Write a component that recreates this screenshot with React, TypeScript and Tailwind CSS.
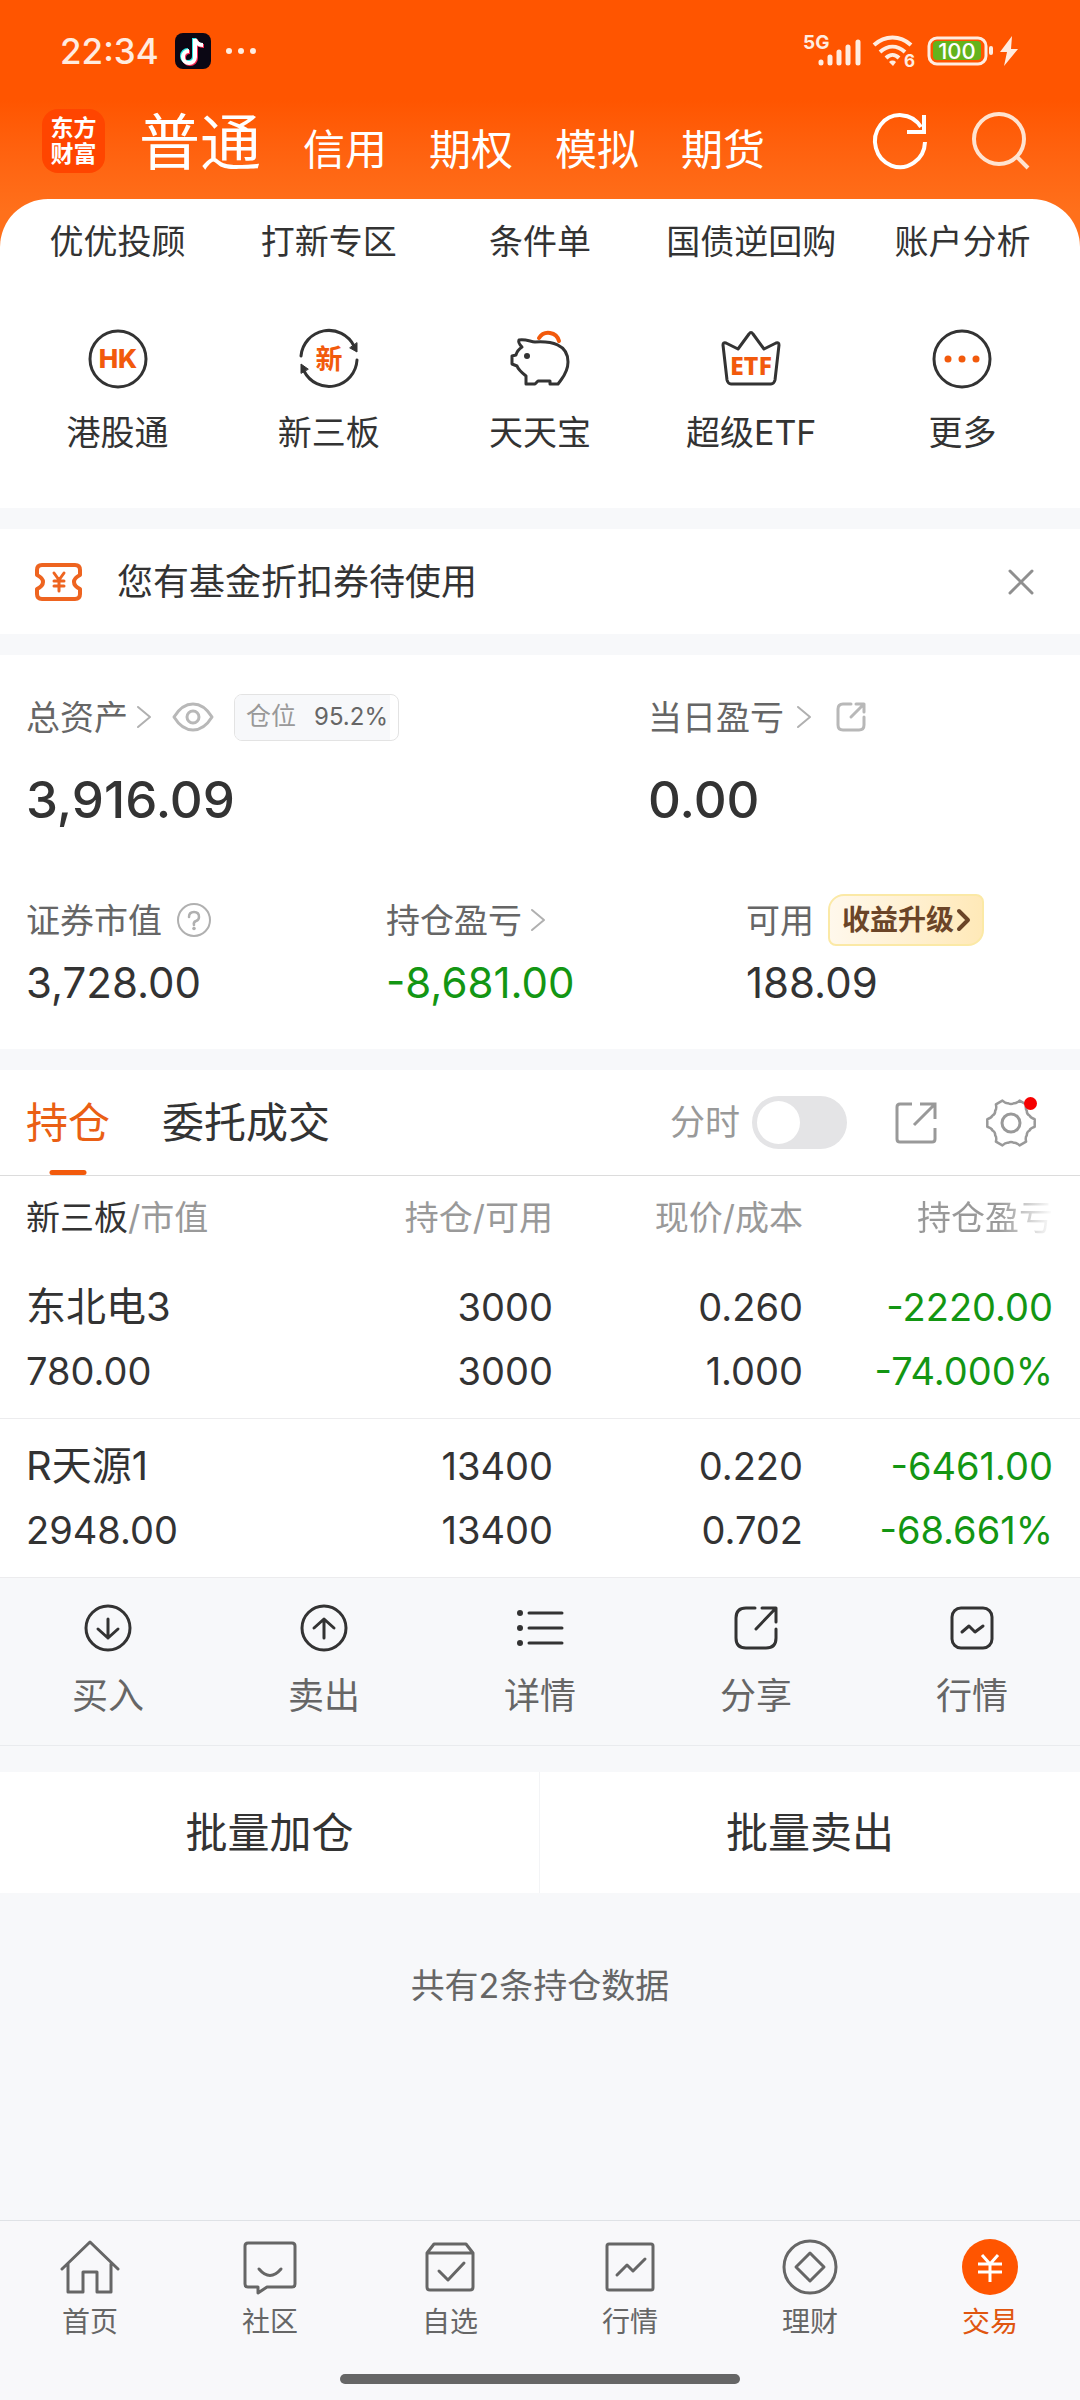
import { useState } from 'react';
import type { ReactNode } from 'react';
import clsx from 'clsx';

interface Holding {
  name:   string;
  value:  string;
  volume: string;
  usable: string;
  price:  string;
  cost:   string;
  profit: string;
  rate:   string;
}

const ACCOUNTS = ['信用', '期权', '模拟', '期货'];

const SHORTCUTS = ['优优投顾', '打新专区', '条件单', '国债逆回购', '账户分析'];

const HOLDINGS: Holding[] = [
  { name: '东北电3', value: '780.00',  volume: '3000',  usable: '3000',  price: '0.260', cost: '1.000', profit: '-2220.00', rate: '-74.000%' },
  { name: 'R天源1',  value: '2948.00', volume: '13400', usable: '13400', price: '0.220', cost: '0.702', profit: '-6461.00', rate: '-68.661%' },
];

/* Six-tooth gear outline around (26, 26) */
function gearPath() {
  const pt = (r: number, deg: number) => {
    const a = (deg * Math.PI) / 180;
    return `${(26 + r * Math.cos(a)).toFixed(1)} ${(26 + r * Math.sin(a)).toFixed(1)}`;
  };
  let d = `M${pt(24, -9)}`;
  for (let i = 0; i < 6; i++) {
    const a = i * 60;
    d += `L${pt(24, a + 9)}Q${pt(20, a + 15)} ${pt(20, a + 22)}Q${pt(18, a + 30)} ${pt(20, a + 38)}Q${pt(20, a + 45)} ${pt(24, a + 51)}`;
  }
  return d + 'Z';
}

function Icon({ w, h, sw = 3, className, children }: { w: number; h: number; sw?: number; className?: string; children: ReactNode }) {
  return (
    <svg
      width={w} height={h} viewBox={`0 0 ${w} ${h}`} fill="none" stroke="currentColor" strokeWidth={sw}
      strokeLinecap="round" strokeLinejoin="round" aria-hidden="true" className={clsx('shrink-0 overflow-visible', className)}
    >
      {children}
    </svg>
  );
}

function Chevron({ className }: { className?: string }) {
  return <Icon w={16} h={26} sw={2} className={clsx('text-[#b0b0b0]', className)}><path d="M2 3l12 10L2 23" /></Icon>;
}

function StatusBar() {
  return (
    <div className="flex h-[102px] items-center pl-[60px] pr-[61px] text-[#ffece0]">
      <span className="text-[35px] font-medium leading-none">22:34</span>
      <Icon w={36} h={36} className="ml-4" sw={4}>
        <rect width="36" height="36" rx="8" fill="#0b0714" stroke="none" />
        <g strokeLinecap="butt">
          <path d="M19 5v18a6 6 0 1 1-6-6M19 6c1 4 4 6 8 6" stroke="#2fe9e4" />
          <path d="M21 7v18a6 6 0 1 1-6-6M21 7c1 4 4 6 8 6" stroke="#fb2b55" />
          <path d="M20 6v18a6 6 0 1 1-6-6M20 6c1 4 4 6 8 6" stroke="#fff" />
        </g>
      </Icon>
      <Icon w={36} h={12} className="ml-[14px]"><g fill="currentColor" stroke="none"><circle cx="4" cy="6" r="3" /><circle cx="16" cy="6" r="3" /><circle cx="28" cy="6" r="3" /></g></Icon>
      <div className="ml-auto flex items-center">
        <Icon w={60} h={44}>
          <text x="0" y="20" fontSize="19" fontWeight="700" fill="currentColor" stroke="none">5G</text>
          <path d="M18 34v-1M27 34v-6M36 34V23M45 34V18M55 34V13" strokeWidth="5" />
        </Icon>
        <Icon w={46} h={44} sw={4} className="ml-2">
          <path d="M3 16c11-10 26-10 37 0M9 23c8-7 17-7 25 0M15 29c4-4 9-4 13 0" strokeLinecap="butt" />
          <path d="M18 33a5 5 0 0 1 7 0l-3 4z" fill="currentColor" stroke="none" />
          <text x="33" y="38" fontSize="17" fontWeight="700" fill="currentColor" stroke="none">6</text>
        </Icon>
        <Icon w={68} h={30} className="ml-[10px]">
          <rect x="2" y="2" width="57" height="26" rx="8" />
          <rect x="6" y="5" width="48" height="19" rx="4" fill="#64b31c" stroke="none" />
          <path d="M64 12v5" strokeWidth="4" />
          <text x="30" y="23" fontSize="22" fontWeight="500" textAnchor="middle" fill="#fff" stroke="none">100</text>
        </Icon>
        <Icon w={20} h={30} className="ml-1"><path d="M13 0L1 16h7L5 30 19 13h-7z" fill="currentColor" stroke="none" /></Icon>
      </div>
    </div>
  );
}

function Header() {
  return (
    <header className="bg-linear-to-b from-[#ff5500] from-40% to-[#ff701b] to-85% pb-[51px]">
      <StatusBar />
      <div className="flex h-[97px] items-center pl-[42px] pr-[49px] text-white">
        <div className="mb-5 flex h-[64px] w-[63px] flex-col items-center justify-center rounded-2xl bg-[#ff4500] text-[23px] font-bold leading-[26px]">
          <span>东方</span>
          <span>财富</span>
        </div>
        <nav className="mb-4 ml-[34px] flex items-baseline gap-[42px]" aria-label="账户类型">
          <a href="#normal" className="text-[61px] leading-[76px]" aria-current="page">普通</a>
          {ACCOUNTS.map((a) => <a key={a} href="#account" className="text-[42px] leading-[60px]">{a}</a>)}
        </nav>
        <button type="button" aria-label="刷新" className="mb-5 ml-auto">
          <Icon w={58} h={58} sw={4}>
            <path d="M54 30A25 26 0 1 1 50 15" strokeLinecap="butt" />
            <path d="M53 3v17H36" strokeLinecap="butt" strokeLinejoin="miter" />
          </Icon>
        </button>
        <button type="button" aria-label="搜索" className="mb-5 ml-[42px]">
          <Icon w={60} h={60} sw={4} className="text-[#ffe3d0]">
            <circle cx="28" cy="28" r="25" />
            <path d="M45 45l12 12" strokeLinecap="butt" />
          </Icon>
        </button>
      </div>
    </header>
  );
}

const MENU = [
  {
    label: '港股通',
    icon: (
      <>
        <circle cx="30" cy="30" r="28" />
        <text x="30" y="39" fontSize="26" fontWeight="800" textAnchor="middle" fill="#f25a0c" stroke="none">HK</text>
      </>
    ),
  },
  {
    label: '新三板',
    icon: (
      <>
        <path d="M2 27A28 28 0 0 1 55 17M58 31A28 28 0 0 1 5 42" />
        <path d="M58 14v9l-7-4zM2 44v-9l7 5z" fill="currentColor" strokeWidth="1" />
        <text x="30" y="40" fontSize="27" fontWeight="700" textAnchor="middle" fill="#f25a0c" stroke="none">新</text>
      </>
    ),
  },
  {
    label: '天天宝',
    icon: (
      <>
        <path d="M29 9a11 11 0 0 1 20 3" stroke="#f25a0c" strokeWidth="4" />
        <path d="M12 18c-3-3-4-5-3-7 6-1 10 1 16 2 16-1 33 2 33 20 0 8-4 14-7 18l-3 4h-8v-3H28l-3 3h-9v-8C11 43 8 40 7 37l-5-2v-8l4-1c1-4 3-6 6-8z" />
        <circle cx="17" cy="27" r="3" fill="currentColor" stroke="none" />
      </>
    ),
  },
  {
    label: '超级ETF',
    icon: (
      <>
        <path d="M2 16q0-3 3-2l12 6L28 5q2-3 4 0l11 15 12-6q3-1 3 2l-4 35q-1 4-4 4H10q-3 0-4-4z" />
        <text x="30" y="46" fontSize="25" fontWeight="800" textAnchor="middle" fill="#f25a0c" stroke="none" fontFamily="'Noto Sans', sans-serif">ETF</text>
      </>
    ),
  },
  {
    label: '更多',
    icon: (
      <>
        <circle cx="30" cy="30" r="28" />
        <g fill="#f25a0c" stroke="none"><circle cx="16" cy="30" r="3.5" /><circle cx="30" cy="30" r="3.5" /><circle cx="44" cy="30" r="3.5" /></g>
      </>
    ),
  },
];

function QuickMenu() {
  return (
    <section className="-mt-[51px] rounded-t-[48px] bg-white px-3 pb-[50px] pt-[18px]">
      <div className="grid grid-cols-5 text-center text-[34px] leading-[50px]">
        {SHORTCUTS.map((s) => <a key={s} href="#shortcut" className="whitespace-nowrap">{s}</a>)}
      </div>
      <div className="mt-[62px] grid grid-cols-5 text-[34px] leading-[50px]">
        {MENU.map((m) => (
          <a key={m.label} href="#menu" className="flex flex-col items-center gap-[19px]">
            <Icon w={60} h={60}>{m.icon}</Icon>
            <span className="whitespace-nowrap">{m.label}</span>
          </a>
        ))}
      </div>
    </section>
  );
}

function CouponNotice() {
  return (
    <section className="mt-[21px] flex h-[105px] items-center bg-white pl-[34px] pr-[45px]">
      <Icon w={50} h={40} sw={4} className="text-[#ee6420]">
        <path d="M8 3h33q5 0 5 5v5q-6 3-6 7t6 7v5q0 5-5 5H8q-5 0-5-5v-5q6-3 6-7t-6-7V8q0-5 5-5z" />
        <path d="M20 11l5 7 5-7M25 18v11M20 19h10M20 24h10" strokeWidth="3" />
      </Icon>
      <p className="ml-[33px] text-[36px] leading-[52px]">您有基金折扣券待使用</p>
      <button type="button" aria-label="关闭" className="ml-auto">
        <Icon w={28} h={28} className="text-[#8f8f8f]"><path d="M3 3l22 22M25 3L3 25" /></Icon>
      </button>
    </section>
  );
}

function Assets() {
  return (
    <section className="mt-[21px] bg-white pb-[38px] pt-[37px]">
      <div className="flex">
        <div className="w-[622px] shrink-0 pl-[26px]">
          <div className="flex h-[50px] items-center text-[34px] text-[#666]">
            总资产
            <Chevron className="ml-2" />
            <button type="button" aria-label="隐藏金额" className="ml-5">
              <Icon w={42} h={30} className="text-[#b8b8b8]">
                <path d="M2 15Q10 2 21 2t19 13Q32 28 21 28T2 15z" />
                <circle cx="21" cy="15" r="6" />
              </Icon>
            </button>
            <span className="ml-5 flex h-[47px] items-center overflow-hidden rounded-lg border border-[#e3e3e3] pr-2 text-[25px]">
              <span className="flex h-full items-center gap-[18px] bg-[#f7f8fa] pl-[11px] pr-0.5">
                <span className="text-[#999]">仓位</span>
                <span className="text-[24px]">95.2%</span>
              </span>
            </span>
          </div>
          <p className="mt-[23px] text-[51px] font-medium leading-[70px]">3,916.09</p>
        </div>
        <div className="flex-1 pl-[26px]">
          <div className="flex h-[50px] items-center text-[34px] text-[#666]">
            当日盈亏
            <Chevron className="ml-3" />
            <button type="button" aria-label="分享当日盈亏" className="ml-6">
              <Icon w={30} h={30} className="text-[#b8b8b8]">
                <path d="M15 2H7Q2 2 2 7v16q0 5 5 5h16q5 0 5-5v-8M15 15L28 2M20 2h8v8" />
              </Icon>
            </button>
          </div>
          <p className="mt-[23px] text-[51px] font-medium leading-[70px]">0.00</p>
        </div>
      </div>
      <div className="mt-[58px] grid grid-cols-3">
        <div className="pl-[26px]">
          <div className="flex h-[54px] items-center text-[34px] text-[#666]">
            证券市值
            <Icon w={36} h={36} sw={2} className="ml-[14px] text-[#b0b0b0]">
              <circle cx="18" cy="18" r="16" />
              <path d="M13 15q0-5 5-5t5 5q0 3-3 4t-2 4" strokeWidth="2.5" />
              <circle cx="18" cy="26.5" r="1.8" fill="currentColor" stroke="none" />
            </Icon>
          </div>
          <p className="mt-2 text-[42px] leading-[56px]">3,728.00</p>
        </div>
        <div className="pl-[26px]">
          <div className="flex h-[54px] items-center text-[34px] text-[#666]">
            持仓盈亏
            <Chevron className="ml-2" />
          </div>
          <p className="mt-2 text-[42px] leading-[56px] text-[#139613]">-8,681.00</p>
        </div>
        <div className="pl-[26px]">
          <div className="flex h-[54px] items-center text-[34px] text-[#666]">
            可用
            <button type="button" className="ml-[14px] flex h-[52px] items-center rounded-bl-lg rounded-br-2xl rounded-tl-2xl rounded-tr-lg border-2 border-[#fbe9a6] bg-linear-to-r from-[#fff8ec] to-[#ffe9b8] px-3 text-[28px] font-bold text-[#6b4528]">
              收益升级
              <Icon w={14} h={24} sw={4} className="ml-0.5"><path d="M3 3l9 9-9 9" /></Icon>
            </button>
          </div>
          <p className="mt-2 text-[42px] leading-[56px]">188.09</p>
        </div>
      </div>
    </section>
  );
}

function HoldingsTabs() {
  const [tab, setTab] = useState('持仓');
  const [intraday, setIntraday] = useState(false);

  return (
    <div className="flex h-[106px] items-center border-b border-[#dcdcdc] pl-[26px] pr-[43px]">
      <div role="tablist" className="flex h-full gap-[52px] text-[42px]">
        {['持仓', '委托成交'].map((t) => (
          <button
            key={t} type="button" role="tab" aria-selected={tab === t} onClick={() => setTab(t)}
            className={clsx('relative', tab === t && 'text-[#ea5f14]')}
          >
            {t}
            {tab === t && <span className="absolute bottom-0 left-1/2 h-[5px] w-[37px] -translate-x-1/2 rounded-full bg-[#f25a0c]" />}
          </button>
        ))}
      </div>
      <label className="ml-auto flex items-center gap-3 text-[35px] text-[#999]">
        分时
        <input
          type="checkbox" role="switch" checked={intraday} onChange={(e) => setIntraday(e.target.checked)}
          className="h-[53px] w-[95px] appearance-none rounded-full bg-[#e4e4e6] p-[5px] before:block before:size-[43px] before:rounded-full before:bg-white checked:bg-[#f25a0c] checked:before:ml-[42px]"
        />
      </label>
      <button type="button" aria-label="分享持仓" className="ml-[48px]">
        <Icon w={42} h={42} className="text-[#999]">
          <path d="M17 2H5Q2 2 2 5v32q0 3 3 3h32q3 0 3-3V26M19 23L40 2M25 2h15v15" strokeLinecap="butt" strokeLinejoin="miter" />
        </Icon>
      </button>
      <button type="button" aria-label="设置" className="relative ml-[48px]">
        <Icon w={52} h={52} className="text-[#999]">
          <path d={gearPath()} strokeWidth="2.5" />
          <circle cx="26" cy="26" r="9" />
        </Icon>
        <span className="absolute right-0 top-0 size-[13px] rounded-full bg-[#f60000]" />
      </button>
    </div>
  );
}

function HoldingsTable() {
  return (
    <table className="w-full table-fixed text-right text-[38px] leading-[64px]">
      <thead>
        <tr className="h-[84px] whitespace-nowrap text-[34px] text-[#999]">
          <th scope="col" className="pl-[26px] text-left font-normal"><span className="text-[#333]">新三板</span>/市值</th>
          <th scope="col" className="w-[250px] font-normal">持仓/可用</th>
          <th scope="col" className="w-[250px] font-normal">现价/成本</th>
          <th scope="col" className="w-[277px] pr-[27px] font-normal">
            <span className="bg-linear-to-r from-[#999] from-60% to-[#fff] bg-clip-text text-transparent">持仓盈亏</span>
          </th>
        </tr>
      </thead>
      <tbody>
        {HOLDINGS.map((h) => (
          <tr key={h.name} className="border-b border-[#ececee]">
            <td className="py-[15px] pl-[26px] text-left"><div className="text-[40px]">{h.name}</div><div>{h.value}</div></td>
            <td><div>{h.volume}</div><div>{h.usable}</div></td>
            <td><div>{h.price}</div><div>{h.cost}</div></td>
            <td className="pr-[27px] text-[#139613]"><div>{h.profit}</div><div>{h.rate}</div></td>
          </tr>
        ))}
      </tbody>
    </table>
  );
}

const ACTIONS = [
  { label: '买入', icon: <><circle cx="24" cy="24" r="22" /><path d="M24 15v19M14 25l10 9 10-9" /></> },
  { label: '卖出', icon: <><circle cx="24" cy="24" r="22" /><path d="M24 34V15M14 24l10-9 10 9" /></> },
  { label: '详情', icon: <><path d="M13 9h33M13 24h33M13 39h33" /><g fill="currentColor" stroke="none"><circle cx="4" cy="9" r="3" /><circle cx="4" cy="24" r="3" /><circle cx="4" cy="39" r="3" /></g></> },
  { label: '分享', icon: <path d="M23 4h-9Q4 4 4 14v20q0 10 10 10h20q10 0 10-10v-9M24 25L43 5M30 4h14v14" /> },
  { label: '行情', icon: <><rect x="4" y="4" width="40" height="40" rx="9" /><path d="M14 28l7-6 6 6 8-6" /></> },
];

const TABS = [
  { label: '首页', icon: <path d="M2 30L30 3l28 27M8 25v28h15V33h14v20h14V25" /> },
  { label: '社区', icon: <><path d="M8 4h44q3 0 3 3v38q0 3-3 3H27l-9 6v-6H8q-3 0-3-3V7q0-3 3-3z" /><path d="M19 30q11 13 22 0" /></> },
  { label: '自选', icon: <><path d="M7 14l7-9h32l7 9v34q0 3-3 3H10q-3 0-3-3zM7 14h46" /><path d="M19 32l9 9 16-17" /></> },
  { label: '行情', icon: <><rect x="7" y="5" width="46" height="46" rx="2" /><path d="M17 36l10-10 6 6 12-12" /></> },
  { label: '理财', icon: <><circle cx="30" cy="28" r="26" /><path d="M30 14l14 14-14 14-14-14z" /></> },
  { label: '交易', icon: <><circle cx="30" cy="28" r="28" fill="#ff5500" stroke="none" /><path d="M22 16l8 9 8-9M30 25v18M18 25h24M18 33h24" stroke="#fff" strokeLinecap="butt" /></> },
];

export default function App() {
  return (
    <div className="flex min-h-screen flex-col bg-[#f7f8fa] font-[Inter,'Noto_Sans_CJK_SC',sans-serif] text-[#333]">
      <Header />
      <main>
        <QuickMenu />
        <CouponNotice />
        <Assets />
        <section className="mt-[21px] bg-white">
          <HoldingsTabs />
          <HoldingsTable />
        </section>
        <div className="grid h-[168px] grid-cols-5 border-b border-[#e9ebee]">
          {ACTIONS.map((a) => (
            <button key={a.label} type="button" className="flex flex-col items-center pt-[26px]">
              <Icon w={48} h={48}>{a.icon}</Icon>
              <span className="mt-[18px] text-[36px] leading-[52px] text-[#666]">{a.label}</span>
            </button>
          ))}
        </div>
        <div className="mt-[26px] grid h-[121px] grid-cols-2 bg-white text-[42px]">
          <button type="button" className="border-r border-[#f3f4f6]">批量加仓</button>
          <button type="button">批量卖出</button>
        </div>
        <p className="mt-[68px] text-center text-[34px] leading-[50px] text-[#666]">共有2条持仓数据</p>
      </main>
      <footer className="mt-auto border-t border-[#dfe2e6] bg-[#f8f8fa] pb-4">
        <nav className="grid grid-cols-6 pt-[18px]" aria-label="主导航">
          {TABS.map((t) => (
            <a key={t.label} href="#tab" className={clsx('flex flex-col items-center', t.label === '交易' ? 'text-[#e0560f]' : 'text-[#666]')}>
              <Icon w={60} h={57}>{t.icon}</Icon>
              <span className="mt-[6px] text-[28px] leading-[40px]">{t.label}</span>
            </a>
          ))}
        </nav>
        <div className="mx-auto mt-[32px] h-[10px] w-[37%] rounded-full bg-[#666]" />
      </footer>
    </div>
  );
}
